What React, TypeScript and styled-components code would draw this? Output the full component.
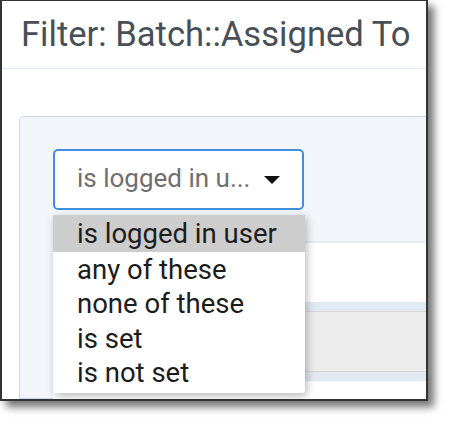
import styled, { createGlobalStyle } from "styled-components";

const OPTIONS = ["is logged in user", "any of these", "none of these", "is set", "is not set"];

function App() {
  return (
    <>
      <GlobalStyle />
      <Canvas>
        <Frame>
          <Header>
            <Title>Filter: Batch::Assigned To</Title>
          </Header>
          <Body>
            <Panel>
              <SelectWrap>
                <SelectBox>
                  <SelectText>is logged in u...</SelectText>
                  <Caret />
                </SelectBox>
                <Menu>
                  {OPTIONS.map((opt, i) => (
                    <MenuItem key={opt} $active={i === 0}>
                      {opt}
                    </MenuItem>
                  ))}
                </Menu>
              </SelectWrap>
              <Table>
                <WhiteRow />
                <Band />
                <GrayRow />
                <Band />
                <WhiteRow />
              </Table>
            </Panel>
          </Body>
        </Frame>
      </Canvas>
    </>
  );
}

const GlobalStyle = createGlobalStyle`
  html, body {
    margin: 0;
    background: #ffffff;
  }
  * {
    box-sizing: border-box;
  }
`;

const Canvas = styled.div`
  width: 450px;
  height: 424px;
  font-family: Roboto, "Liberation Sans", sans-serif;
`;

const Frame = styled.div`
  width: 428px;
  height: 401px;
  border: 2px solid #333333;
  border-top-width: 1px;
  background: #ffffff;
  box-shadow: 6px 6px 8px rgba(0, 0, 0, 0.55);
  overflow: hidden;
  display: flex;
  flex-direction: column;
`;

const Header = styled.div`
  height: 68px;
  flex-shrink: 0;
  padding-left: 19px;
  border-bottom: 1px solid #e3eaf2;
  display: flex;
  align-items: center;
`;

const Title = styled.h1`
  margin: 0;
  font-size: 34.6px;
  font-weight: 400;
  color: #484f57;
  white-space: nowrap;
  padding-bottom: 2px;
`;

const Body = styled.div`
  flex: 1;
  padding: 47px 0 0 17px;
  display: flex;
  min-height: 0;
`;

const Panel = styled.div`
  flex: 1;
  margin-right: -40px;
  background: #f2f6fa;
  border: 1px solid #c8d8ea;
  border-radius: 5px 0 0 0;
  padding: 32px 0 0 33px;
  display: flex;
  flex-direction: column;
`;

const SelectWrap = styled.div`
  position: relative;
  width: 251px;
`;

const SelectBox = styled.div`
  height: 61px;
  border: 2px solid #3f8fdb;
  border-radius: 5px;
  background: #ffffff;
  display: flex;
  align-items: center;
  justify-content: space-between;
  padding: 0 22px 0 22px;
`;

const SelectText = styled.span`
  font-size: 26px;
  color: #6f6f6f;
  white-space: nowrap;
  padding-bottom: 3px;
`;

const Caret = styled.span`
  width: 0;
  height: 0;
  border-left: 8px solid transparent;
  border-right: 8px solid transparent;
  border-top: 8px solid #111111;
`;

const Menu = styled.ul`
  position: absolute;
  top: 66px;
  left: 0;
  width: 252px;
  margin: 0;
  padding: 0 0 3px;
  list-style: none;
  background: #ffffff;
  border-radius: 0 0 3px 3px;
  box-shadow: 2px 3px 8px rgba(0, 0, 0, 0.28);
  z-index: 2;
`;

const MenuItem = styled.li<{ $active?: boolean }>`
  height: ${(p) => (p.$active ? "37px" : "34.5px")};
  padding-left: 24px;
  display: flex;
  align-items: center;
  font-size: 27.5px;
  color: #1c1c1c;
  white-space: nowrap;
  background: ${(p) => (p.$active ? "#cdcdcd" : "transparent")};
`;

const Table = styled.div`
  margin-top: 31px;
  flex: 1;
  border-top: 2px solid #e4ecf4;
  display: flex;
  flex-direction: column;
`;

const WhiteRow = styled.div`
  height: 59px;
  flex-shrink: 0;
  background: #ffffff;
`;

const Band = styled.div`
  height: 9px;
  flex-shrink: 0;
  background: #e1e9f2;
`;

const GrayRow = styled.div`
  height: 61px;
  flex-shrink: 0;
  background: #ececec;
  border-top: 1px solid #d6d6d6;
  border-bottom: 1px solid #d6d6d6;
`;

export default App;
